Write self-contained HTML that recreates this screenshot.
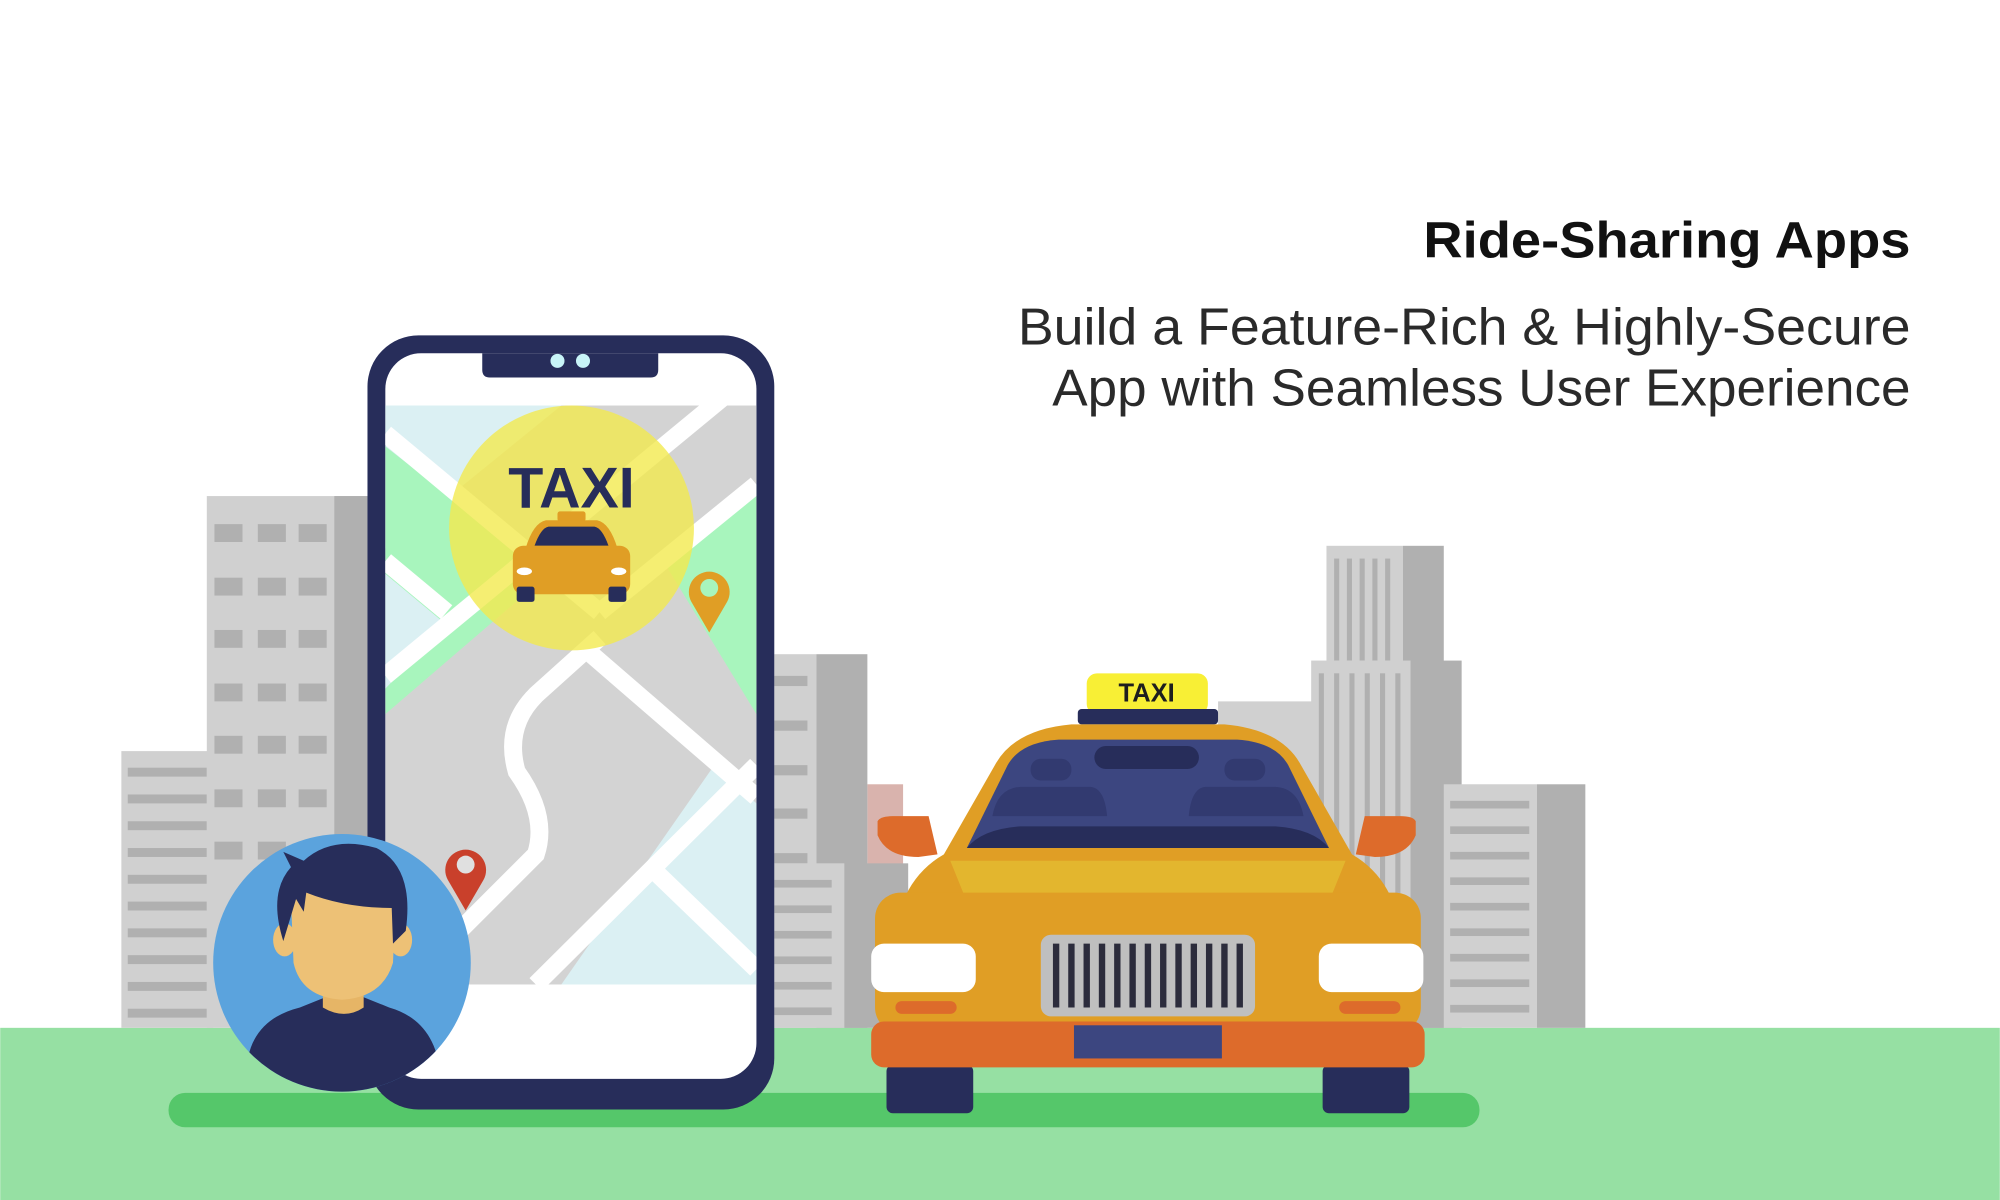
<!DOCTYPE html>
<html><head><meta charset="utf-8"><style>
html,body{margin:0;padding:0;background:#fff;}
svg{display:block;}
</style></head><body>
<svg width="2000" height="1200" viewBox="0 0 1568 941" xmlns="http://www.w3.org/2000/svg">
<rect width="1568" height="941" fill="#fff"/>
<!-- text -->
<g font-family="Liberation Sans, sans-serif" fill="#111" text-anchor="end">
<text x="1498" y="202" font-size="40" font-weight="bold" textLength="382" lengthAdjust="spacingAndGlyphs">Ride-Sharing Apps</text>
<text x="1498" y="270" font-size="41" fill="#2a2a2a" textLength="700" lengthAdjust="spacingAndGlyphs">Build a Feature-Rich &amp; Highly-Secure</text>
<text x="1498" y="318" font-size="41" fill="#2a2a2a" textLength="673" lengthAdjust="spacingAndGlyphs">App with Seamless User Experience</text>
</g>
<!-- ground -->
<rect x="0" y="806" width="1568" height="135" fill="#96e0a3"/>
<rect x="132" y="857" width="1028" height="27" rx="13" fill="#55c76a"/>
<!-- left buildings -->
<rect x="95" y="589" width="72" height="217" fill="#d0d0d0"/>
<g fill="#b0b0b0">
<rect x="100" y="602" width="62" height="7"/><rect x="100" y="623" width="62" height="7"/><rect x="100" y="644" width="62" height="7"/><rect x="100" y="665" width="62" height="7"/><rect x="100" y="686" width="62" height="7"/><rect x="100" y="707" width="62" height="7"/><rect x="100" y="728" width="62" height="7"/><rect x="100" y="749" width="62" height="7"/><rect x="100" y="770" width="62" height="7"/><rect x="100" y="791" width="62" height="7"/>
</g>
<rect x="162" y="389" width="126" height="417" fill="#d0d0d0"/>
<rect x="262" y="389" width="26" height="417" fill="#b0b0b0"/>
<g fill="#b0b0b0">
<rect x="168" y="411" width="22" height="14"/><rect x="202" y="411" width="22" height="14"/><rect x="234" y="411" width="22" height="14"/>
<rect x="168" y="453" width="22" height="14"/><rect x="202" y="453" width="22" height="14"/><rect x="234" y="453" width="22" height="14"/>
<rect x="168" y="494" width="22" height="14"/><rect x="202" y="494" width="22" height="14"/><rect x="234" y="494" width="22" height="14"/>
<rect x="168" y="536" width="22" height="14"/><rect x="202" y="536" width="22" height="14"/><rect x="234" y="536" width="22" height="14"/>
<rect x="168" y="577" width="22" height="14"/><rect x="202" y="577" width="22" height="14"/><rect x="234" y="577" width="22" height="14"/>
<rect x="168" y="619" width="22" height="14"/><rect x="202" y="619" width="22" height="14"/><rect x="234" y="619" width="22" height="14"/>
<rect x="168" y="660" width="22" height="14"/><rect x="202" y="660" width="22" height="14"/>
</g>
<!-- middle buildings -->
<rect x="680" y="615" width="28" height="63" fill="#d9b3ad"/>
<rect x="607" y="513" width="33" height="293" fill="#d0d0d0"/>
<rect x="640" y="513" width="40" height="293" fill="#b0b0b0"/>
<g fill="#b0b0b0"><rect x="607" y="530" width="26" height="8"/><rect x="607" y="565" width="26" height="8"/><rect x="607" y="600" width="26" height="8"/><rect x="607" y="634" width="26" height="8"/><rect x="607" y="669" width="26" height="8"/></g>
<rect x="607" y="677" width="55" height="129" fill="#d0d0d0"/>
<rect x="662" y="677" width="50" height="129" fill="#b0b0b0"/>
<g fill="#b0b0b0"><rect x="607" y="690" width="45" height="6"/><rect x="607" y="710" width="45" height="6"/><rect x="607" y="730" width="45" height="6"/><rect x="607" y="750" width="45" height="6"/><rect x="607" y="770" width="45" height="6"/><rect x="607" y="790" width="45" height="6"/></g>
<!-- right buildings -->
<rect x="955" y="550" width="75" height="256" fill="#d0d0d0"/>
<rect x="1040" y="428" width="60" height="378" fill="#d0d0d0"/>
<rect x="1100" y="428" width="32" height="378" fill="#b0b0b0"/>
<g fill="#b0b0b0"><rect x="1046" y="438" width="4" height="80"/><rect x="1056" y="438" width="4" height="80"/><rect x="1066" y="438" width="4" height="80"/><rect x="1076" y="438" width="4" height="80"/><rect x="1086" y="438" width="4" height="80"/></g>
<rect x="1028" y="518" width="78" height="288" fill="#d0d0d0"/>
<rect x="1106" y="518" width="40" height="288" fill="#b0b0b0"/>
<g fill="#b0b0b0"><rect x="1034" y="528" width="4" height="270"/><rect x="1046" y="528" width="4" height="270"/><rect x="1058" y="528" width="4" height="270"/><rect x="1070" y="528" width="4" height="270"/><rect x="1082" y="528" width="4" height="270"/><rect x="1094" y="528" width="4" height="270"/></g>
<rect x="1132" y="615" width="73" height="191" fill="#d0d0d0"/>
<rect x="1205" y="615" width="38" height="191" fill="#b0b0b0"/>
<g fill="#b0b0b0"><rect x="1137" y="628" width="62" height="6"/><rect x="1137" y="648" width="62" height="6"/><rect x="1137" y="668" width="62" height="6"/><rect x="1137" y="688" width="62" height="6"/><rect x="1137" y="708" width="62" height="6"/><rect x="1137" y="728" width="62" height="6"/><rect x="1137" y="748" width="62" height="6"/><rect x="1137" y="768" width="62" height="6"/><rect x="1137" y="788" width="62" height="6"/></g>
<!-- phone -->
<rect x="288" y="263" width="319" height="607" rx="40" fill="#272d5a"/>
<rect x="302" y="277" width="291" height="569" rx="28" fill="#fff"/>
<clipPath id="map"><rect x="302" y="318" width="291" height="454"/></clipPath>
<g clip-path="url(#map)">
<rect x="302" y="318" width="291" height="454" fill="#d3d3d3"/>
<polygon points="302,318 440,318 302,430" fill="#dbf0f3"/>
<polygon points="302,350 430,450 302,560" fill="#a8f5bd"/>
<polygon points="302,450 350,490 302,540" fill="#dbf0f3"/>
<polygon points="520,440 593,380 593,560" fill="#a8f5bd"/>
<polygon points="560,600 593,630 593,772 440,772" fill="#dbf0f3"/>
<g stroke="#fff" stroke-width="14" fill="none">
<line x1="302" y1="340" x2="470" y2="480"/>
<line x1="302" y1="440" x2="350" y2="480"/>
<line x1="302" y1="530" x2="593" y2="290"/>
<line x1="470" y1="480" x2="593" y2="380"/>
<line x1="460" y1="510" x2="593" y2="625"/>
<line x1="420" y1="772" x2="593" y2="600"/>
<line x1="510" y1="680" x2="593" y2="760"/>
<path d="M470,500 L420,545 Q395,570 405,605 Q430,640 420,670 L360,730"/>
</g>
</g>
<path d="M378,277 H516 V290 Q516,296 510,296 H384 Q378,296 378,290 Z" fill="#272d5a"/>
<circle cx="437" cy="283" r="5.5" fill="#c8f4f8"/><circle cx="457" cy="283" r="5.5" fill="#c8f4f8"/>
<!-- yellow circle -->
<circle cx="448" cy="414" r="96" fill="#f2ea4f" opacity="0.8"/>
<text x="448" y="398" text-anchor="middle" font-family="Liberation Sans, sans-serif" font-weight="bold" font-size="45" fill="#272d5a">TAXI</text>
<rect x="437" y="401" width="22" height="8" rx="2" fill="#e09e25"/>
<path d="M412,430 Q418,410 428,408 H468 Q478,410 484,430 Z" fill="#e09e25"/>
<path d="M419,428 Q424,414 430,413 H466 Q472,414 477,428 Z" fill="#272d5a"/>
<rect x="402" y="428" width="92" height="38" rx="8" fill="#e09e25"/>
<rect x="405" y="460" width="14" height="12" rx="2" fill="#272d5a"/><rect x="477" y="460" width="14" height="12" rx="2" fill="#272d5a"/>
<ellipse cx="411" cy="448" rx="6" ry="3" fill="#fff"/><ellipse cx="485" cy="448" rx="6" ry="3" fill="#fff"/>
<!-- pins -->
<path d="M556,496 L542,472 A16,16 0 1,1 570,472 Z" fill="#e09e25"/><circle cx="556" cy="461" r="7" fill="#a8f5bd"/>
<path d="M365,714 L351,690 A16,16 0 1,1 379,690 Z" fill="#c9402b"/><circle cx="365" cy="678" r="7" fill="#e0e0e0"/>
<!-- person -->
<clipPath id="pc"><circle cx="268" cy="755" r="101"/></clipPath>
<circle cx="268" cy="755" r="101" fill="#5ba3dd"/>
<g clip-path="url(#pc)">
<path d="M193,840 Q195,800 235,790 L255,782 H285 L305,790 Q340,800 345,840 L345,860 H193 Z" fill="#272d5a"/>
<path d="M253,770 H285 V790 Q270,800 253,790 Z" fill="#e6b566"/>
<ellipse cx="223" cy="737" rx="9" ry="13" fill="#edc176"/><ellipse cx="314" cy="737" rx="9" ry="13" fill="#edc176"/>
<path d="M228,705 Q228,680 268,685 Q310,680 310,710 L308,755 Q300,782 268,784 Q236,782 230,755 Z" fill="#edc176"/>
<path d="M222,738 Q210,700 228,680 L222,668 L238,675 Q260,655 295,665 Q325,680 318,730 L308,740 L307,712 Q270,712 240,700 L238,715 L232,705 Z" fill="#272d5a"/>
</g>
<!-- big taxi -->
<rect x="852" y="528" width="95" height="32" rx="8" fill="#f8ef35"/>
<text x="899" y="550" text-anchor="middle" font-family="Liberation Sans, sans-serif" font-weight="bold" font-size="20" fill="#1e1e1e">TAXI</text>
<rect x="845" y="556" width="110" height="12" rx="3" fill="#272d5a"/>
<path d="M688,644 Q690,640 700,640 H728 L735,670 L720,672 Q695,672 688,655 Z" fill="#dd6b2b"/>
<path d="M1110,644 Q1108,640 1098,640 H1070 L1063,670 L1078,672 Q1103,672 1110,655 Z" fill="#dd6b2b"/>
<path d="M700,740 Q705,690 740,670 L780,600 Q795,572 840,568 H960 Q1005,572 1020,600 L1060,670 Q1095,690 1100,740 Z" fill="#e09e25"/>
<path d="M758,665 L790,600 Q800,582 830,580 H970 Q1000,582 1010,600 L1042,665 Z" fill="#3c4680"/>
<path d="M758,665 Q770,650 800,648 H1000 Q1030,650 1042,665 Z" fill="#272d5a"/>
<path d="M778,640 Q782,618 800,617 H855 Q866,618 868,640 Z" fill="#323a70"/>
<path d="M932,640 Q934,618 945,617 H1000 Q1018,618 1022,640 Z" fill="#323a70"/>
<rect x="858" y="585" width="82" height="18" rx="9" fill="#272d5a"/>
<rect x="808" y="595" width="32" height="17" rx="8" fill="#323a70"/><rect x="960" y="595" width="32" height="17" rx="8" fill="#323a70"/>
<path d="M745,675 H1055 L1040,712 Q900,730 760,712 Z" fill="#e3b62e"/>
<rect x="686" y="700" width="428" height="110" rx="20" fill="#e09e25"/>
<rect x="683" y="740" width="82" height="38" rx="10" fill="#fff"/>
<rect x="1034" y="740" width="82" height="38" rx="10" fill="#fff"/>
<rect x="702" y="785" width="48" height="10" rx="5" fill="#dd6b2b"/><rect x="1050" y="785" width="48" height="10" rx="5" fill="#dd6b2b"/>
<rect x="816" y="733" width="168" height="64" rx="8" fill="#bfbfbf"/>
<g stroke="#2c2c3c" stroke-width="5"><line x1="828" y1="740" x2="828" y2="790"/><line x1="840" y1="740" x2="840" y2="790"/><line x1="852" y1="740" x2="852" y2="790"/><line x1="864" y1="740" x2="864" y2="790"/><line x1="876" y1="740" x2="876" y2="790"/><line x1="888" y1="740" x2="888" y2="790"/><line x1="900" y1="740" x2="900" y2="790"/><line x1="912" y1="740" x2="912" y2="790"/><line x1="924" y1="740" x2="924" y2="790"/><line x1="936" y1="740" x2="936" y2="790"/><line x1="948" y1="740" x2="948" y2="790"/><line x1="960" y1="740" x2="960" y2="790"/><line x1="972" y1="740" x2="972" y2="790"/></g>
<rect x="695" y="835" width="68" height="38" rx="5" fill="#272d5a"/>
<rect x="1037" y="835" width="68" height="38" rx="5" fill="#272d5a"/>
<rect x="683" y="801" width="434" height="36" rx="10" fill="#dd6b2b"/>
<rect x="842" y="804" width="116" height="26" fill="#3c4680"/>
</svg>
</body></html>
